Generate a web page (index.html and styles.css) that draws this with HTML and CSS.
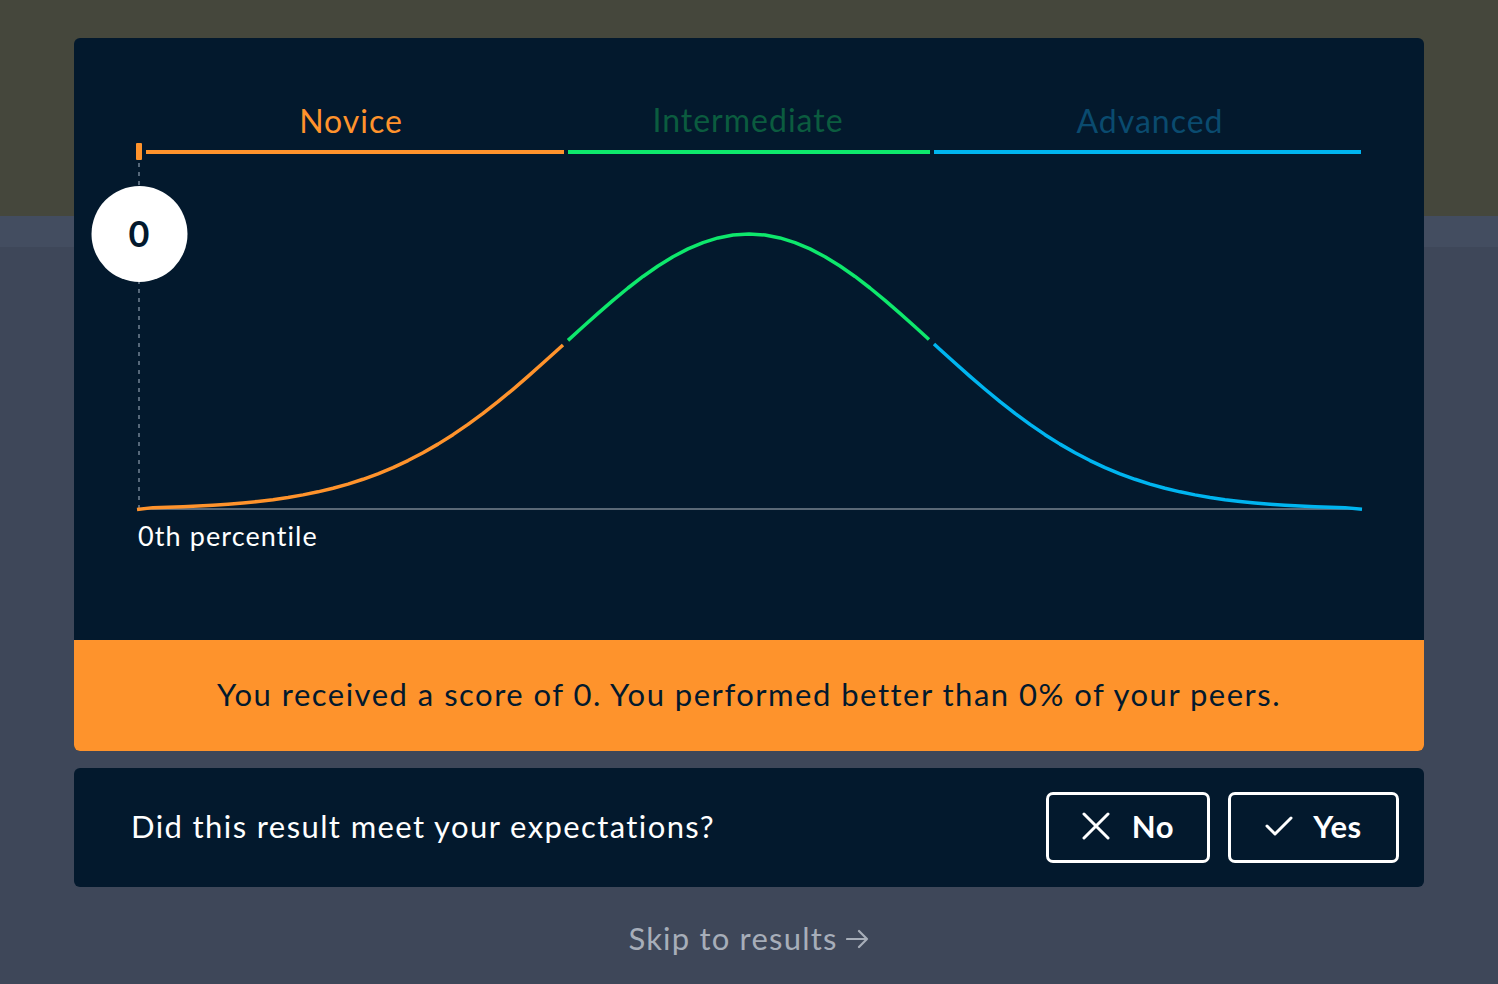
FILE: index.html
```html
<!DOCTYPE html>
<html lang="en">
<head>
<meta charset="utf-8">
<title>Result</title>
<link rel="stylesheet" href="styles.css">
</head>
<body>
<main class="page">
  <section class="result-card">
    <div class="chart">
      <svg class="chart-svg" width="1350" height="602" viewBox="74 38 1350 602" xmlns="http://www.w3.org/2000/svg">
        <text class="lbl lbl-novice" x="351" y="133" text-anchor="middle">Novice</text>
        <text class="lbl lbl-inter" x="748" y="132" text-anchor="middle">Intermediate</text>
        <text class="lbl lbl-adv" x="1150" y="133" text-anchor="middle">Advanced</text>
        <rect x="136" y="143" width="6" height="17" rx="1" fill="#ff932c"/>
        <rect x="146" y="150" width="418" height="4" fill="#ff932c"/>
        <rect x="568" y="150" width="362" height="4" fill="#0ee86c"/>
        <rect x="934" y="150" width="427" height="4" fill="#00b5f0"/>
        <line x1="139" y1="163" x2="139" y2="509" stroke="#56687a" stroke-width="2" stroke-dasharray="4 5"/>
        <line x1="138" y1="509" x2="1361" y2="509" stroke="#5a6876" stroke-width="2"/>
        <polyline fill="none" stroke="#ff932c" stroke-width="3.5" stroke-linejoin="round" points="137,509.5 153,507.63 168,507.22 183,506.7 198,506.04 213,505.23 228,504.22 243,502.99 258,501.48 273,499.66 288,497.48 303,494.89 318,491.83 333,488.24 348,484.07 363,479.27 378,473.77 393,467.55 408,460.54 423,452.73 438,444.11 453,434.66 468,424.41 483,413.38 498,401.64 513,389.28 528,376.37 543,363.06 558,349.49 563,344.93"/>
        <polyline fill="none" stroke="#0ee86c" stroke-width="3.5" stroke-linejoin="round" points="568,340.37 583,326.75 598,313.35 613,300.36 628,287.99 643,276.47 658,265.98 673,256.72 688,248.86 703,242.55 718,237.92 733,235.05 749,234 765,235.05 780,237.92 795,242.55 810,248.86 825,256.72 840,265.98 855,276.47 870,287.99 885,300.36 900,313.35 915,326.75 929,339.46"/>
        <polyline fill="none" stroke="#00b5f0" stroke-width="3.5" stroke-linejoin="round" points="934,344.03 940,349.49 955,363.06 970,376.37 985,389.28 1000,401.64 1015,413.38 1030,424.41 1045,434.66 1060,444.11 1075,452.73 1090,460.54 1105,467.55 1120,473.77 1135,479.27 1150,484.07 1165,488.24 1180,491.83 1195,494.89 1210,497.48 1225,499.66 1240,501.48 1255,502.99 1270,504.22 1285,505.23 1300,506.04 1315,506.7 1330,507.22 1345,507.63 1362,509.3"/>
        <circle cx="139.5" cy="234" r="48" fill="#ffffff"/>
        <text class="score" x="139" y="247" text-anchor="middle">0</text>
        <text class="pct" x="138" y="546">0th percentile</text>
      </svg>
    </div>
    <div class="banner">You received a score of 0. You performed better than 0% of your peers.</div>
  </section>

  <section class="feedback">
    <p class="question">Did this result meet your expectations?</p>
    <div class="actions">
      <button class="btn btn-no" type="button">
        <svg width="28" height="28" viewBox="0 0 28 28"><path d="M2 2 L26 26 M26 2 L2 26" stroke="#fff" stroke-width="3" stroke-linecap="round" fill="none"/></svg>
        <span>No</span>
      </button>
      <button class="btn btn-yes" type="button">
        <svg width="28" height="22" viewBox="0 0 28 22"><path d="M2 11 L10 19 L26 3" stroke="#fff" stroke-width="3" stroke-linecap="round" stroke-linejoin="round" fill="none"/></svg>
        <span>Yes</span>
      </button>
    </div>
  </section>

  <a class="skip" href="#">Skip to results <svg width="24" height="22" viewBox="0 0 24 22"><path d="M1 11 H21 M13 3 L21 11 L13 19" stroke="#a7aeb9" stroke-width="2.2" fill="none" stroke-linecap="round" stroke-linejoin="round"/></svg></a>
</main>
</body>
</html>
```

FILE: styles.css
```css
html, body {
  margin: 0;
  padding: 0;
}
body {
  width: 1498px;
  height: 984px;
  overflow: hidden;
  background: linear-gradient(to bottom, #45473c 0, #45473c 216px, #434d60 216px, #434d60 247px, #3e4759 247px, #3e4759 100%);
  font-family: "Lato", "Liberation Sans", sans-serif;
  font-variant-ligatures: none;
}
.page {
  width: 1350px;
  margin: 0 auto;
  padding-top: 38px;
  display: flex;
  flex-direction: column;
}
.result-card {
  border-radius: 6px;
  overflow: hidden;
  background: #03192d;
}
.chart {
  height: 602px;
}
.chart-svg {
  display: block;
}
.lbl {
  font-family: "Lato", "Liberation Sans", sans-serif;
  font-size: 32px;
  letter-spacing: 1px;
}
.lbl-novice { fill: #ff932c; }
.lbl-inter { fill: #0b5c3f; }
.lbl-adv { fill: #0a4b6f; }
.score {
  font-family: "Lato", "Liberation Sans", sans-serif;
  font-size: 36px;
  font-weight: 700;
  fill: #03192d;
}
.pct {
  font-family: "Lato", "Liberation Sans", sans-serif;
  font-size: 27px;
  letter-spacing: 1.1px;
  fill: #ffffff;
}
.banner {
  height: 111px;
  background: #fe932c;
  color: #03192d;
  font-size: 31px;
  letter-spacing: 1.5px;
  display: flex;
  align-items: center;
  justify-content: center;
  padding-bottom: 3px;
  box-sizing: border-box;
}
.feedback {
  margin-top: 17px;
  height: 119px;
  background: #03192d;
  border-radius: 6px;
  display: flex;
  align-items: center;
  justify-content: space-between;
  padding: 0 25px 0 57px;
  box-sizing: border-box;
}
.question {
  margin: 0 0 3px;
  color: #ffffff;
  font-size: 31px;
  letter-spacing: 1.4px;
}
.actions {
  display: flex;
  gap: 18px;
}
.btn {
  height: 71px;
  border: 3px solid #ffffff;
  border-radius: 7px;
  background: transparent;
  color: #ffffff;
  font-family: "Lato", "Liberation Sans", sans-serif;
  font-size: 31px;
  font-weight: 700;
  letter-spacing: 0.6px;
  display: flex;
  align-items: center;
  justify-content: center;
  gap: 22px;
  padding: 0 0 3px;
  box-sizing: border-box;
}
.btn-no { width: 164px; }
.btn-yes { width: 171px; gap: 20px; }
.btn svg { display: block; }
.skip {
  align-self: center;
  margin-top: 32px;
  color: #a7aeb9;
  font-size: 31px;
  letter-spacing: 1.2px;
  text-decoration: none;
  display: flex;
  align-items: center;
  gap: 8px;
}
.skip svg { display: block; margin-top: 2px; }
```
